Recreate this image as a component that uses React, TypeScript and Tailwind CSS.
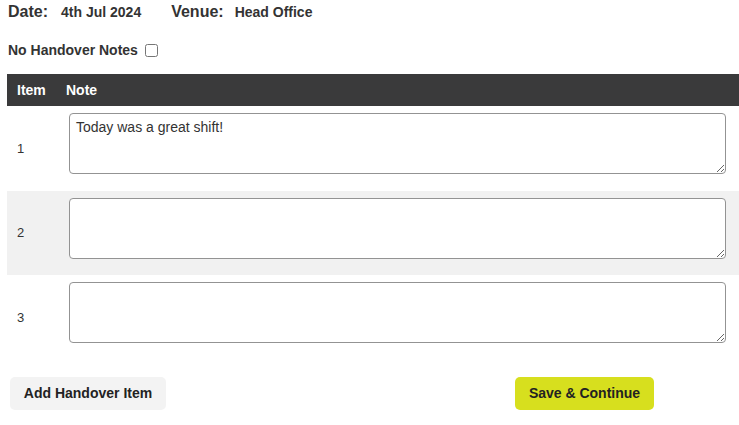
import React from "react";

const rows = [
  { n: 1, text: "Today was a great shift!", h: "h-[85px]" },
  { n: 2, text: "", h: "h-[84px]" },
  { n: 3, text: "", h: "h-[85px]" },
];

export default function App() {
  return (
    <div className="w-[739px] h-[425px] bg-white text-[#333] overflow-hidden" style={{ fontFamily: '"Liberation Sans", Arial, sans-serif' }}>
      <div className="flex items-baseline pl-[8px] h-[22px]">
        <span className="text-[16px] font-bold text-[#333]">Date:</span>
        <span className="ml-[13px] text-[14px] font-bold text-[#333]">4th Jul 2024</span>
        <span className="ml-[30px] text-[16px] font-bold text-[#333]">Venue:</span>
        <span className="ml-[11px] text-[14px] font-bold text-[#333]">Head Office</span>
      </div>
      <div className="flex items-center pl-[8px] mt-[18px] h-[20px]">
        <span className="text-[14px] font-bold text-[#333]">No Handover Notes</span>
        <input type="checkbox" className="ml-[7px] w-[13px] h-[13px]" />
      </div>
      <div className="ml-[7px] mt-[14px]">
        <div className="flex items-center h-[32px] bg-[#3a3a3b] text-white text-[14px] font-bold">
          <div className="w-[59px] pl-[10px]">Item</div>
          <div>Note</div>
        </div>
        {rows.map((r, i) => (
          <div key={r.n} className={`flex ${r.h} ${i === 1 ? "bg-[#f1f1f1]" : "bg-white"}`}>
            <div className="w-[62px] pl-[10px] flex items-center text-[13px] text-[#333]">{r.n}</div>
            <div className="pt-[7px]">
              <textarea
                defaultValue={r.text}
                className="block w-[657px] h-[61px] border border-[#939393] rounded-[4px] bg-white px-[6px] py-[3px] text-[14px] text-[#333] resize-y"
                style={{ fontFamily: '"Liberation Sans", Arial, sans-serif' }}
              />
            </div>
          </div>
        ))}
      </div>
      <div className="flex mt-[17px]">
        <button className="ml-[10px] w-[156px] h-[33px] rounded-[5px] bg-[#f3f3f3] text-[14px] font-bold text-[#222]">Add Handover Item</button>
        <button className="ml-[349px] w-[139px] h-[33px] rounded-[5px] bg-[#d7df1e] text-[14px] font-bold text-[#222]">Save &amp; Continue</button>
      </div>
    </div>
  );
}
